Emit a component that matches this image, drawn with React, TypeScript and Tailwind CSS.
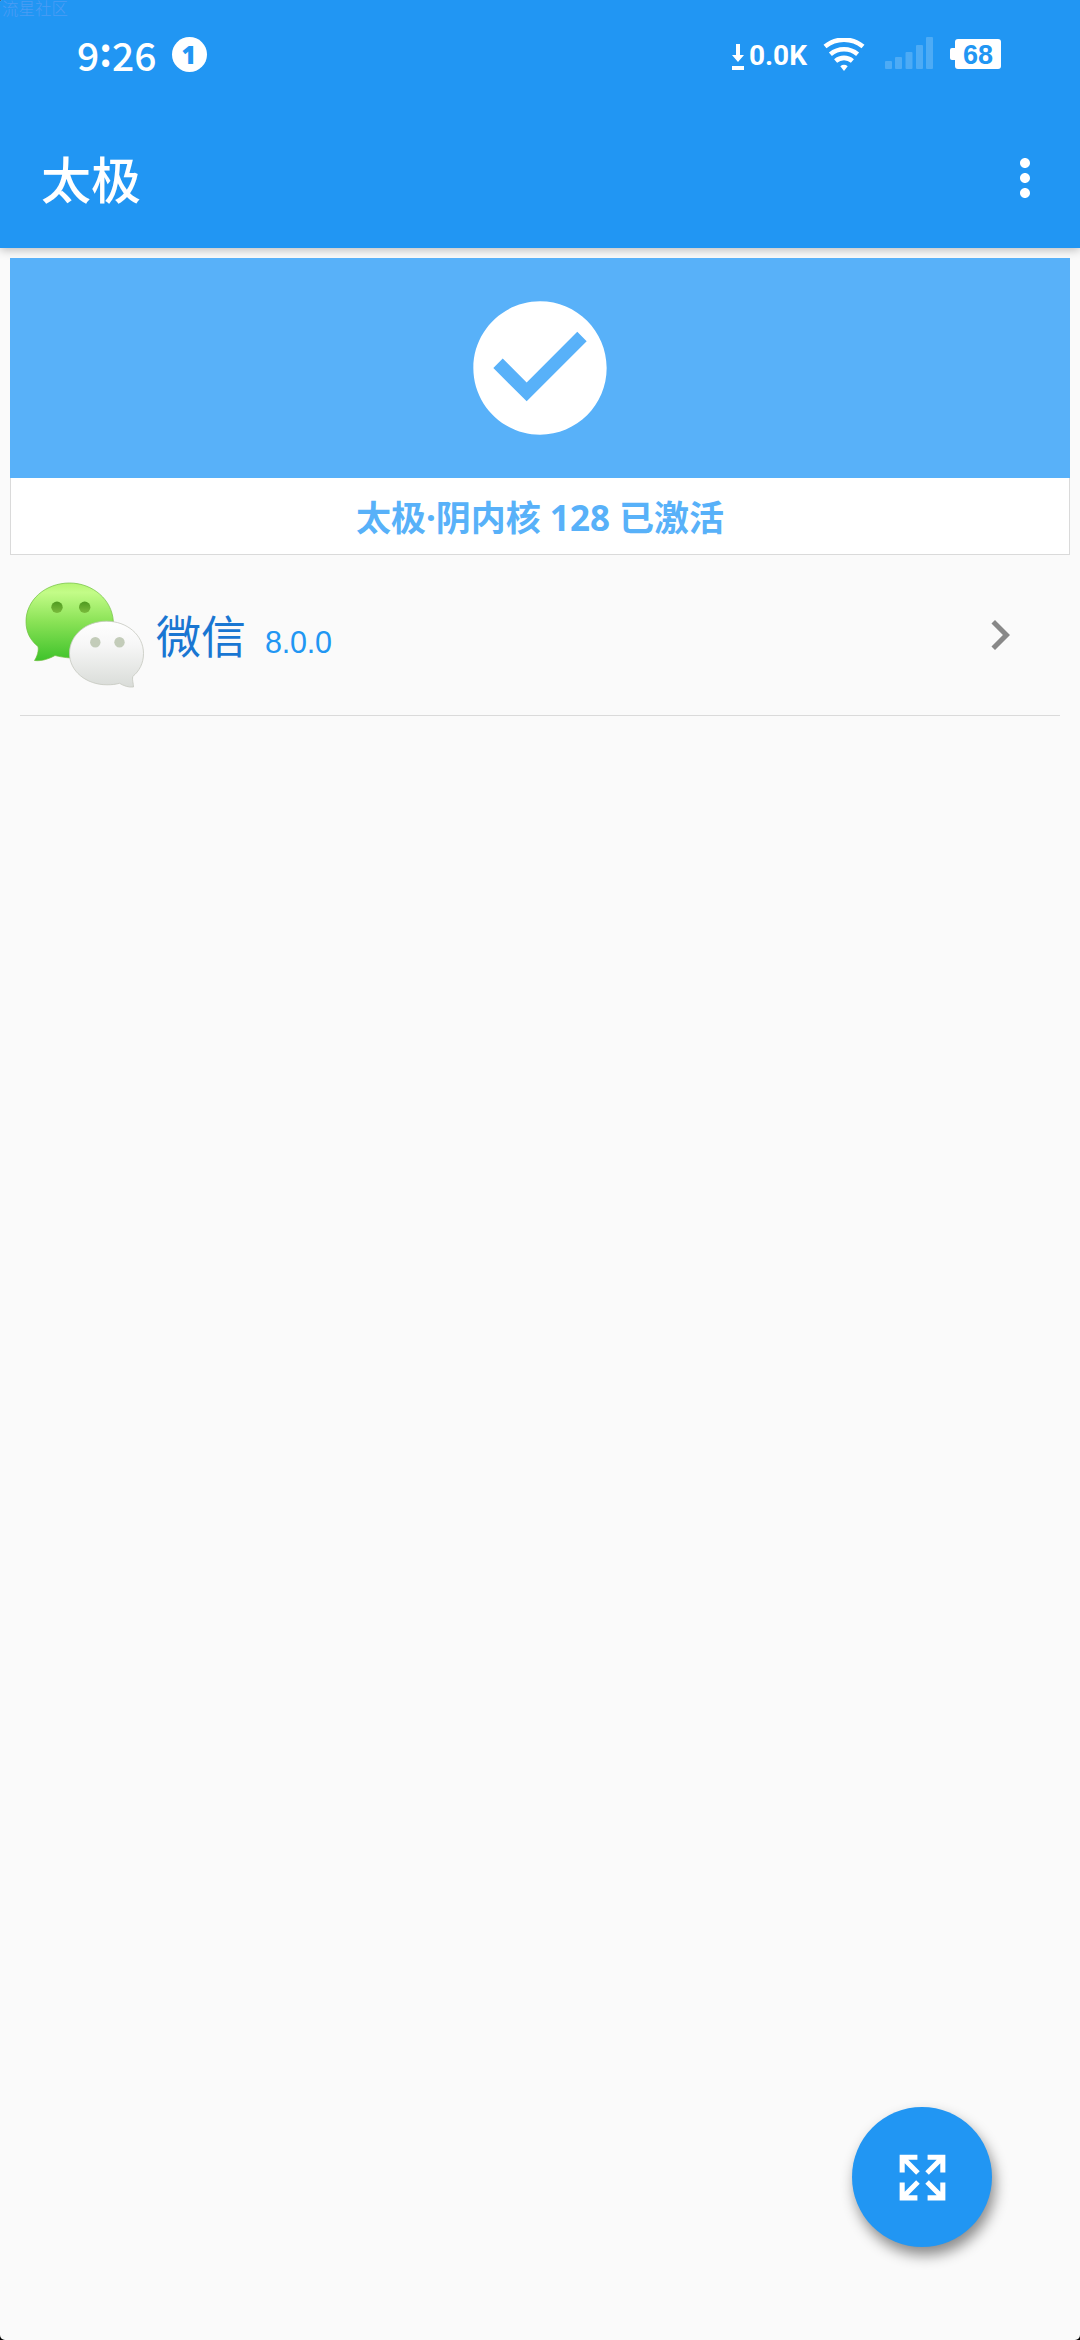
import React from 'react';
import { MdCheckCircle, MdChevronRight, MdMoreVert } from 'react-icons/md';

const StatusBar: React.FC = () => (
  <div className="flex h-[108px] items-center justify-between pl-[77px] pr-[79px] text-white">
    <div className="flex items-center">
      <span className="flex font-['Noto_Sans_CJK_SC',sans-serif] text-[39px] leading-[54px] font-medium">
        9<span className="-mt-[4px] font-bold">:</span>26
      </span>
      <span className="ml-[16px] flex h-[35px] w-[35px] items-center justify-center rounded-full bg-white pr-[2px] font-['Open_Sans',sans-serif] text-[25px] leading-[35px] font-extrabold text-[#2196f3]">
        1
      </span>
    </div>
    <div className="flex items-center">
      <svg className="mt-[5px] h-[26px] w-[12px]" viewBox="0 0 12 26" fill="currentColor">
        <path d="M4 0h4v11h4l-6 7-6-7h4zM0 22h12v4H0z" />
      </svg>
      <span className="mt-[3px] ml-[5px] font-['Roboto',sans-serif] text-[28px] leading-[28px] font-bold">0.0K</span>
      <WifiIcon />
      <SignalIcon />
      <div className="ml-[17px] flex items-center">
        <div className="h-[12px] w-[5px] rounded-l-[2px] bg-white" />
        <div className="flex h-[30px] w-[46px] items-center justify-center rounded-[3px] bg-white pt-px font-['Liberation_Sans',sans-serif] text-[27px] leading-[30px] font-bold text-[#2196f3]">
          68
        </div>
      </div>
    </div>
  </div>
);

const WifiIcon: React.FC = () => (
  <svg className="ml-[16px] h-[33px] w-[42px]" viewBox="0 0 42 33" fill="none" stroke="currentColor" strokeWidth="4.6">
    <path d="M2 8.6a29.5 29.5 0 0 1 38 0" />
    <path d="M7.4 16.2a21 21 0 0 1 27.2 0" />
    <path d="M12.6 23a12.8 12.8 0 0 1 16.8 0" />
    <path d="M17.3 28.2q3.7-2.800 7.400 0L21 33z" fill="currentColor" stroke="none" />
  </svg>
);

const SignalIcon: React.FC = () => (
  <svg className="mb-[2px] ml-[20px] h-[32px] w-[48px]" viewBox="0 0 48 32" fill="currentColor" fillOpacity="0.2">
    <rect x="0" y="24" width="7" height="8" rx="1" />
    <rect x="10" y="20" width="7" height="12" rx="1" />
    <rect x="20.5" y="15" width="7" height="17" rx="1" />
    <rect x="31" y="8" width="7" height="24" rx="1" />
    <rect x="41" y="0" width="7" height="32" rx="1" />
  </svg>
);

const WeChatIcon: React.FC = () => (
  <svg className="h-[120px] w-[126px]" viewBox="0 0 126 120">
    <defs>
      <linearGradient id="green" x1="0" y1="0" x2="0" y2="1">
        <stop offset="0" stopColor="#b5f573" />
        <stop offset="0.12" stopColor="#c3fc88" />
        <stop offset="0.5" stopColor="#8ae256" />
        <stop offset="1" stopColor="#3fc32b" />
      </linearGradient>
      <linearGradient id="white" x1="0" y1="0" x2="0" y2="1">
        <stop offset="0" stopColor="#ffffff" />
        <stop offset="0.35" stopColor="#f7f7f7" />
        <stop offset="1" stopColor="#d9dcd8" />
      </linearGradient>
      <linearGradient id="eye" x1="0" y1="0" x2="0" y2="1">
        <stop offset="0" stopColor="#4f9a20" />
        <stop offset="1" stopColor="#7abb3c" />
      </linearGradient>
    </defs>
    <path
      d="M49.500 8C25.500 8 6 25 6 46.500C6 57.500 10.500 65.500 18 71.500C19 76 17 81.500 14.500 85.500C22 86.500 29.500 83.500 35 80.500C44 83 57 84 68 82C80 78 93 60 93.300 46C92 25 73 8 49.500 8Z"
      fill="url(#green)"
      stroke="#6fbf3f"
      strokeOpacity="0.7"
    />
    <g fill="url(#eye)">
      <circle cx="37" cy="32.300" r="5.700" />
      <circle cx="64.700" cy="32.300" r="5.700" />
    </g>
    <path
      d="M86.500 46.200C66 46.200 49.500 60 49.500 78.500C49.500 96 66 109.800 87 109.800C92 109.800 96 109.300 99.500 108.300C104 111 108.500 112.500 113.500 112C113.500 108.500 112 105 112.700 101.500C119.500 96 123.500 88 123.500 78.500C123.500 60 107 46.200 86.500 46.200Z"
      fill="url(#white)"
      stroke="#c5c8bf"
      strokeOpacity="0.8"
    />
    <g fill="#c3ccb9">
      <circle cx="75.300" cy="67.300" r="5.200" />
      <circle cx="99.500" cy="67.300" r="5.200" />
    </g>
  </svg>
);

const StatusCard: React.FC = () => (
  <div className="mx-[10px] mt-[10px]">
    <div className="flex h-[220px] items-center justify-center bg-[#58b1f9]">
      <MdCheckCircle className="h-[160px] w-[160px] text-white" />
    </div>
    <div className="flex h-[77px] items-center justify-center border border-t-0 border-[#dadada] bg-white pt-[4px] font-['Noto_Sans','Noto_Sans_CJK_SC',sans-serif] text-[35px] leading-[50px] font-bold text-[#58b1f9]">
      太极·阴内核 128 已激活
    </div>
  </div>
);

const AppRow: React.FC<{ name: string; version: string }> = ({ name, version }) => (
  <div className="mx-[20px] flex h-[161px] items-center border-b border-[#dadada] pr-[30px]">
    <WeChatIcon />
    <span className="ml-[10px] font-['Noto_Sans_CJK_SC',sans-serif] text-[45px] leading-[66px] text-[#1976d2]">{name}</span>
    <span className="mt-[14px] ml-[19px] font-['Liberation_Sans',sans-serif] text-[30.5px] leading-[36px] tracking-[-0.2px] text-[#2196f3]">{version}</span>
    <MdChevronRight className="ml-auto h-[60px] w-[60px] text-[#888888]" />
  </div>
);

export default function App() {
  return (
    <div className="w-[1080px] bg-black">
      <div className="relative flex h-[2340px] flex-col rounded-tl-[2px] rounded-b-[5px] bg-[#fafafa]">
        <span className="absolute top-0 left-[2px] font-['Noto_Sans_CJK_SC',sans-serif] text-[16.5px] leading-[17px] font-light text-[#4d9cf4]">
          流星社区
        </span>
        <header className="h-[248px] rounded-tl-[2px] bg-[#2196f3] shadow-[0_2px_10px_rgba(0,0,0,0.25)]">
          <StatusBar />
          <div className="flex h-[140px] items-center justify-between pr-[25px] pl-[41px] text-white">
            <h1 className="-mt-[3px] font-['Noto_Sans_CJK_SC',sans-serif] text-[50px] leading-[72px] font-medium">太极</h1>
            <MdMoreVert className="h-[60px] w-[60px]" />
          </div>
        </header>
        <main className="flex-1">
          <StatusCard />
          <AppRow name="微信" version="8.0.0" />
        </main>
        <button className="absolute right-[88px] bottom-[93px] flex h-[140px] w-[140px] items-center justify-center rounded-full bg-[#2196f3] text-white shadow-[3px_8px_14px_rgba(0,0,0,0.45)]">
          <svg className="h-[61px] w-[61px]" viewBox="0 0 24 24" fill="currentColor">
            <path d="M9.500 13.090l1.410 1.410L6.410 19H10v2H3v-7h2v3.590zM10.910 9.500L9.500 10.910 5 6.410V10H3V3h7v2H6.410zM14.500 13.090l4.500 4.500V14h2v7h-7v-2h3.590l-4.500-4.500zM13.090 9.500L17.590 5H14V3h7v7h-2V6.410l-4.500 4.500z" />
          </svg>
        </button>
      </div>
    </div>
  );
}
